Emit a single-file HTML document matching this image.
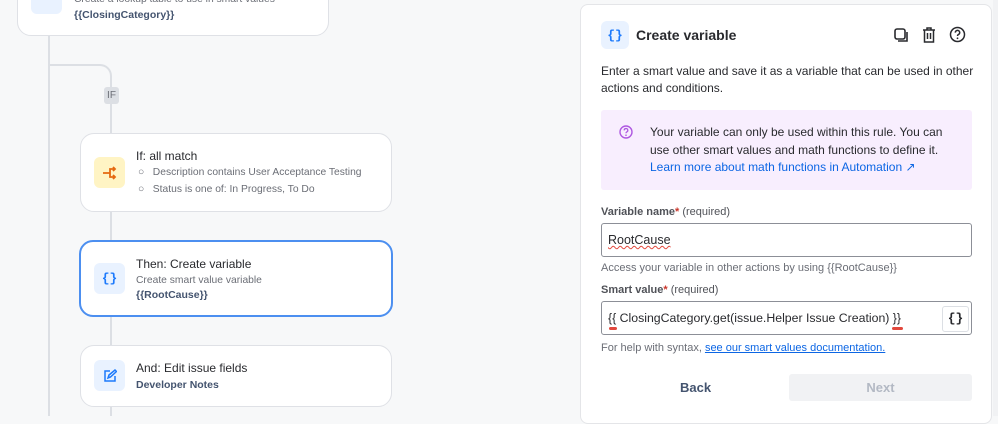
<!DOCTYPE html>
<html><head><style>
*{box-sizing:border-box;margin:0;padding:0}
body{width:998px;height:416px;overflow:hidden;background:#f7f8f9;font-family:"Liberation Sans",sans-serif;color:#292a2e;position:relative}
.a{position:absolute}
.card{position:absolute;background:#fff;border:1px solid #dfe1e6;border-radius:14px}
.ic{position:absolute;width:31px;height:31px;border-radius:6px;background:#e9f2ff;color:#1d7afc;font-family:"Liberation Mono",monospace;font-size:13px;font-weight:bold;display:flex;align-items:center;justify-content:center}
.t{position:absolute;font-size:12px;white-space:nowrap}
.s{font-size:10.3px;color:#6b6e76}
.panel{position:absolute;left:580px;top:4px;width:412px;height:420px;background:#fff;border:1px solid #e4e5e8;border-radius:8px}
.p{position:absolute;white-space:nowrap;font-size:12px}
.inp{position:absolute;left:20px;width:371px;height:34px;border:1px solid #8c8f97;border-radius:3px}
</style></head><body>
<div class="a" style="left:48px;top:36px;width:2px;height:380px;background:#dcdfe4"></div>
<div class="a" style="left:49px;top:64px;width:63px;height:30px;border-top:2px solid #dcdfe4;border-right:2px solid #dcdfe4;border-top-right-radius:12px"></div>
<div class="a" style="left:110px;top:94px;width:2px;height:322px;background:#dcdfe4"></div>
<div class="a" style="left:104px;top:87px;width:15px;height:17px;background:#dcdfe4;border-radius:3px;font-size:10px;color:#6b6e76;text-align:center;line-height:17px">IF</div>

<div class="card" style="left:17px;top:-20px;width:312px;height:56px"></div>
<div class="ic" style="left:31px;top:-17px"></div>
<div class="t s" style="left:74px;top:-6px">Create a lookup table to use in smart values</div>
<div class="t" style="left:74px;top:9px;font-size:10.5px;font-weight:bold;color:#44546f">{{ClosingCategory}}</div>

<div class="card" style="left:80px;top:133px;width:312px;height:79px"></div>
<div class="ic" style="left:94px;top:157px;background:#fff4c4;color:#e56910">
<svg width="16" height="14" viewBox="0 0 16 14"><path d="M1 7H8M8 7V3H13M8 7V11H13M11 1l2 2-2 2M11 9l2 2-2 2" stroke="#e56910" stroke-width="1.8" fill="none"/></svg></div>
<div class="t" style="left:136px;top:149px">If: all match</div>
<div class="t s" style="left:138px;top:167px">○&nbsp;&nbsp; Description contains User Acceptance Testing</div>
<div class="t s" style="left:138px;top:184px">○&nbsp;&nbsp; Status is one of: In Progress, To Do</div>

<div class="card" style="left:79px;top:240px;width:314px;height:77px;border:2px solid #4c8ff0"></div>
<div class="ic" style="left:94px;top:263px">{}</div>
<div class="t" style="left:136px;top:257px">Then: Create variable</div>
<div class="t s" style="left:136px;top:275px">Create smart value variable</div>
<div class="t" style="left:136px;top:289px;font-size:10.5px;font-weight:bold;color:#44546f">{{RootCause}}</div>

<div class="card" style="left:80px;top:345px;width:312px;height:62px"></div>
<div class="ic" style="left:94px;top:360px">
<svg width="14" height="14" viewBox="0 0 14 14"><path d="M7 2H2V12H12V7M5 9l1-3 6-5 1.5 1.5-6 5.5z" stroke="#1d7afc" stroke-width="1.5" fill="none"/></svg></div>
<div class="t" style="left:136px;top:361px">And: Edit issue fields</div>
<div class="t" style="left:136px;top:379px;font-size:10.5px;font-weight:bold;color:#44546f">Developer Notes</div>

<div class="panel">
<div class="ic" style="left:20px;top:16px;width:28px;height:28px">{}</div>
<div class="p" style="left:55px;top:22px;font-size:14px;font-weight:bold">Create variable</div>
<svg class="a" style="left:312px;top:22px" width="16" height="16" viewBox="0 0 16 16"><rect x="2" y="2" width="10" height="10" rx="2" stroke="#292a2e" stroke-width="1.6" fill="none"/><path d="M5 14H14V5" stroke="#292a2e" stroke-width="1.6" fill="none"/></svg>
<svg class="a" style="left:341px;top:22px" width="14" height="16" viewBox="0 0 14 16"><path d="M1 3H13M5 3V1H9V3M2.5 3V15H11.5V3M5.5 6V12M8.5 6V12" stroke="#292a2e" stroke-width="1.5" fill="none"/></svg>
<svg class="a" style="left:368px;top:21px" width="17" height="17" viewBox="0 0 17 17"><circle cx="8.5" cy="8.5" r="7" stroke="#292a2e" stroke-width="1.5" fill="none"/><path d="M6.3 6.6a2.2 2.2 0 1 1 3 2c-.6.3-.8.7-.8 1.4" stroke="#292a2e" stroke-width="1.5" fill="none"/><circle cx="8.5" cy="12.3" r="0.9" fill="#292a2e"/></svg>
<div class="p" style="left:20px;top:58px;line-height:17px;white-space:normal;width:385px">Enter a smart value and save it as a variable that can be used in other actions and conditions.</div>
<div class="a" style="left:20px;top:105px;width:371px;height:80px;background:#f8eefe;border-radius:3px"></div>
<svg class="a" style="left:38px;top:120px" width="14" height="14" viewBox="0 0 14 14"><circle cx="7" cy="7" r="6" stroke="#af59e1" stroke-width="1.4" fill="none"/><path d="M5.2 5.4a1.8 1.8 0 1 1 2.5 1.6c-.5.3-.7.6-.7 1.2" stroke="#af59e1" stroke-width="1.3" fill="none"/><circle cx="7" cy="10.2" r=".8" fill="#af59e1"/></svg>
<div class="p" style="left:69px;top:119px;line-height:17.5px">Your variable can only be used within this rule. You can<br>use other smart values and math functions to define it.<br><span style="color:#0c66e4">Learn more about math functions in Automation ↗</span></div>
<div class="p" style="left:20px;top:201px;font-size:11px;font-weight:bold;color:#505258">Variable name<span style="color:#c9372c">*</span> <span style="font-weight:normal">(required)</span></div>
<div class="inp" style="top:218px"></div>
<div class="p" style="left:27px;top:228px;font-size:12.5px;text-decoration:underline wavy #e2483d;text-decoration-thickness:1px">RootCause</div>
<div class="p" style="left:20px;top:257px;font-size:11px;color:#6b6e76">Access your variable in other actions by using {{RootCause}}</div>
<div class="p" style="left:20px;top:279px;font-size:11px;font-weight:bold;color:#505258">Smart value<span style="color:#c9372c">*</span> <span style="font-weight:normal">(required)</span></div>
<div class="inp" style="top:296px"></div>
<div class="p" style="left:27px;top:306px;font-size:12.3px">{{ ClosingCategory.get(issue.Helper Issue Creation) }}</div>
<div class="a" style="left:28px;top:322px;width:8px;height:3px;background:#e2483d;border-radius:2px"></div>
<div class="a" style="left:311px;top:322px;width:11px;height:3px;background:#e2483d;border-radius:2px"></div>
<div class="a" style="left:361px;top:301px;width:27px;height:26px;border:1px solid #dcdfe4;border-radius:3px;font-family:'Liberation Mono',monospace;font-weight:bold;font-size:13px;text-align:center;line-height:24px">{}</div>
<div class="p" style="left:20px;top:337px;font-size:11px;color:#6b6e76">For help with syntax, <span style="color:#0c66e4;text-decoration:underline">see our smart values documentation.</span></div>
<div class="p" style="left:99px;top:375px;font-size:13px;font-weight:bold;color:#44546f">Back</div>
<div class="a" style="left:208px;top:369px;width:183px;height:27px;background:#f1f2f4;border-radius:3px;font-size:13px;font-weight:bold;color:#b3b9c4;text-align:center;line-height:27px">Next</div>
</div>
<div class="a" style="left:993px;top:0;width:5px;height:416px;background:#f1f2f4"></div>
</body></html>
